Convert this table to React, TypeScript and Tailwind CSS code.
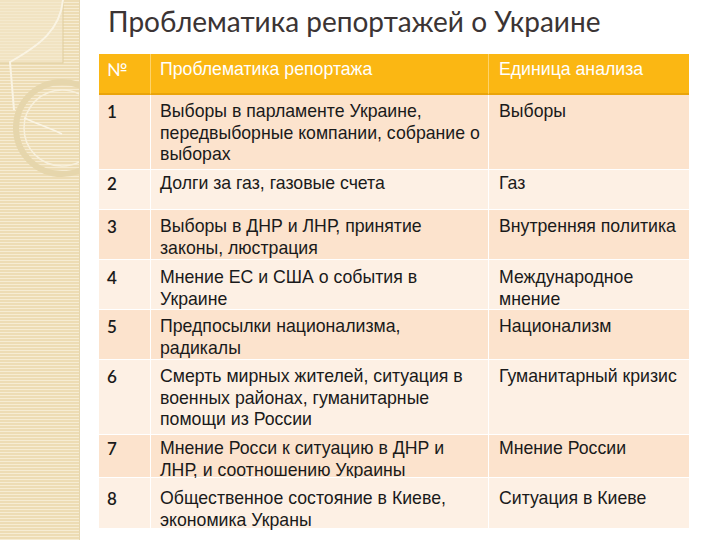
const rows: { n: string; topic: string; unit: string; h: string; pt: string }[] = [
  { n: '1', topic: 'Выборы в парламенте Украине, передвыборные компании, собрание о выборах', unit: 'Выборы', h: 'h-[75px]', pt: 'pt-[6px]' },
  { n: '2', topic: 'Долги за газ, газовые счета', unit: 'Газ', h: 'h-[40px]', pt: 'pt-[3px]' },
  { n: '3', topic: 'Выборы в ДНР и ЛНР, принятие законы, люстрация', unit: 'Внутренняя политика', h: 'h-[50px]', pt: 'pt-[6px]' },
  { n: '4', topic: 'Мнение ЕС и США  о события в Украине', unit: 'Международное мнение', h: 'h-[50px]', pt: 'pt-[7px]' },
  { n: '5', topic: 'Предпосылки национализма, радикалы', unit: 'Национализм', h: 'h-[50px]', pt: 'pt-[6px]' },
  { n: '6', topic: 'Смерть мирных жителей, ситуация в военных районах, гуманитарные помощи из России', unit: 'Гуманитарный кризис', h: 'h-[75px]', pt: 'pt-[6px]' },
  { n: '7', topic: 'Мнение Росси к ситуацию в ДНР и ЛНР, и соотношению Украины', unit: 'Мнение России', h: 'h-[43px]', pt: 'pt-[3px]' },
  { n: '8', topic: 'Общественное состояние в Киеве, экономика Украны', unit: 'Ситуация в Киеве', h: 'h-[51px]', pt: 'pt-[10px]' },
];

function SideStrip() {
  return (
    <div className="relative w-[80px] shrink-0 overflow-hidden border-r border-[#e6d6ae] bg-[repeating-linear-gradient(180deg,#eddcb4_0px,#eddcb4_2px,#f6ecd3_2px,#f6ecd3_3px)]">
      <svg className="absolute left-0 top-0" width="80" height="200" viewBox="0 0 80 200" fill="none">
        <rect x="-1" y="-1" width="64" height="64" fill="#f3e8cc" fillOpacity="0.6" stroke="#e0cd9e" strokeWidth="1" />
        <path d="M63 0 C 60 30, 40 45, 10 62 L 14 110" stroke="#faf4e4" strokeWidth="2" />
        <circle cx="62" cy="128" r="46" stroke="#e6d6ac" strokeWidth="6" />
        <circle cx="62" cy="128" r="38" stroke="#f8f0dc" strokeWidth="1.5" />
        <path d="M24 118 C 40 125, 55 130, 62 134" stroke="#faf4e4" strokeWidth="1.5" />
      </svg>
    </div>
  );
}

export default function App() {
  return (
    <div className="flex w-[720px] h-[540px] bg-white overflow-hidden">
      <SideStrip />
      <div className="flex-1 flex flex-col pl-[19px]">
        <h1 className="h-[54px] pl-[9px] pt-[2px] text-[28px] leading-[38px] text-[#3b3434] [font-family:'Lato','Open_Sans',sans-serif]">
          Проблематика репортажей о Украине
        </h1>
        <div className="w-[590px] grid grid-cols-[52px_338px_200px] [font-family:'Liberation_Sans',Arial,sans-serif] text-[17.7px] leading-[21.5px]">
          <div className="h-[41px] bg-[#fbb713] border-r border-b-2 border-r-[#fdd36a] border-b-[#eaa40a] px-[8px] pt-[5px] text-white [font-family:'Lato',sans-serif]">№</div>
          <div className="h-[41px] bg-[#fbb713] border-r border-b-2 border-r-[#fdd36a] border-b-[#eaa40a] px-[9px] pt-[5px] text-white">Проблематика репортажа</div>
          <div className="h-[41px] bg-[#fbb713] border-b-2 border-b-[#eaa40a] px-[10px] pt-[5px] text-white">Единица анализа</div>
          {rows.map((r, i) => {
            const bg = i % 2 === 0 ? 'bg-[#fce3cd]' : 'bg-[#fdf0e4]';
            return (
              <div key={r.n} className="contents">
                <div className={`${r.h} ${r.pt} ${bg} border-r border-b border-white px-[8px] text-[#1a1a1a] text-[17px] [font-family:'Lato',sans-serif] font-semibold`}>
                  {r.n}
                </div>
                <div className={`${r.h} ${r.pt} ${bg} border-r border-b border-white pl-[9px] pr-[2px] text-[#1a1a1a]`}>
                  {r.topic}
                </div>
                <div className={`${r.h} ${r.pt} ${bg} border-b border-white pl-[10px] pr-[2px] text-[#1a1a1a]`}>
                  {r.unit}
                </div>
              </div>
            );
          })}
        </div>
      </div>
    </div>
  );
}
